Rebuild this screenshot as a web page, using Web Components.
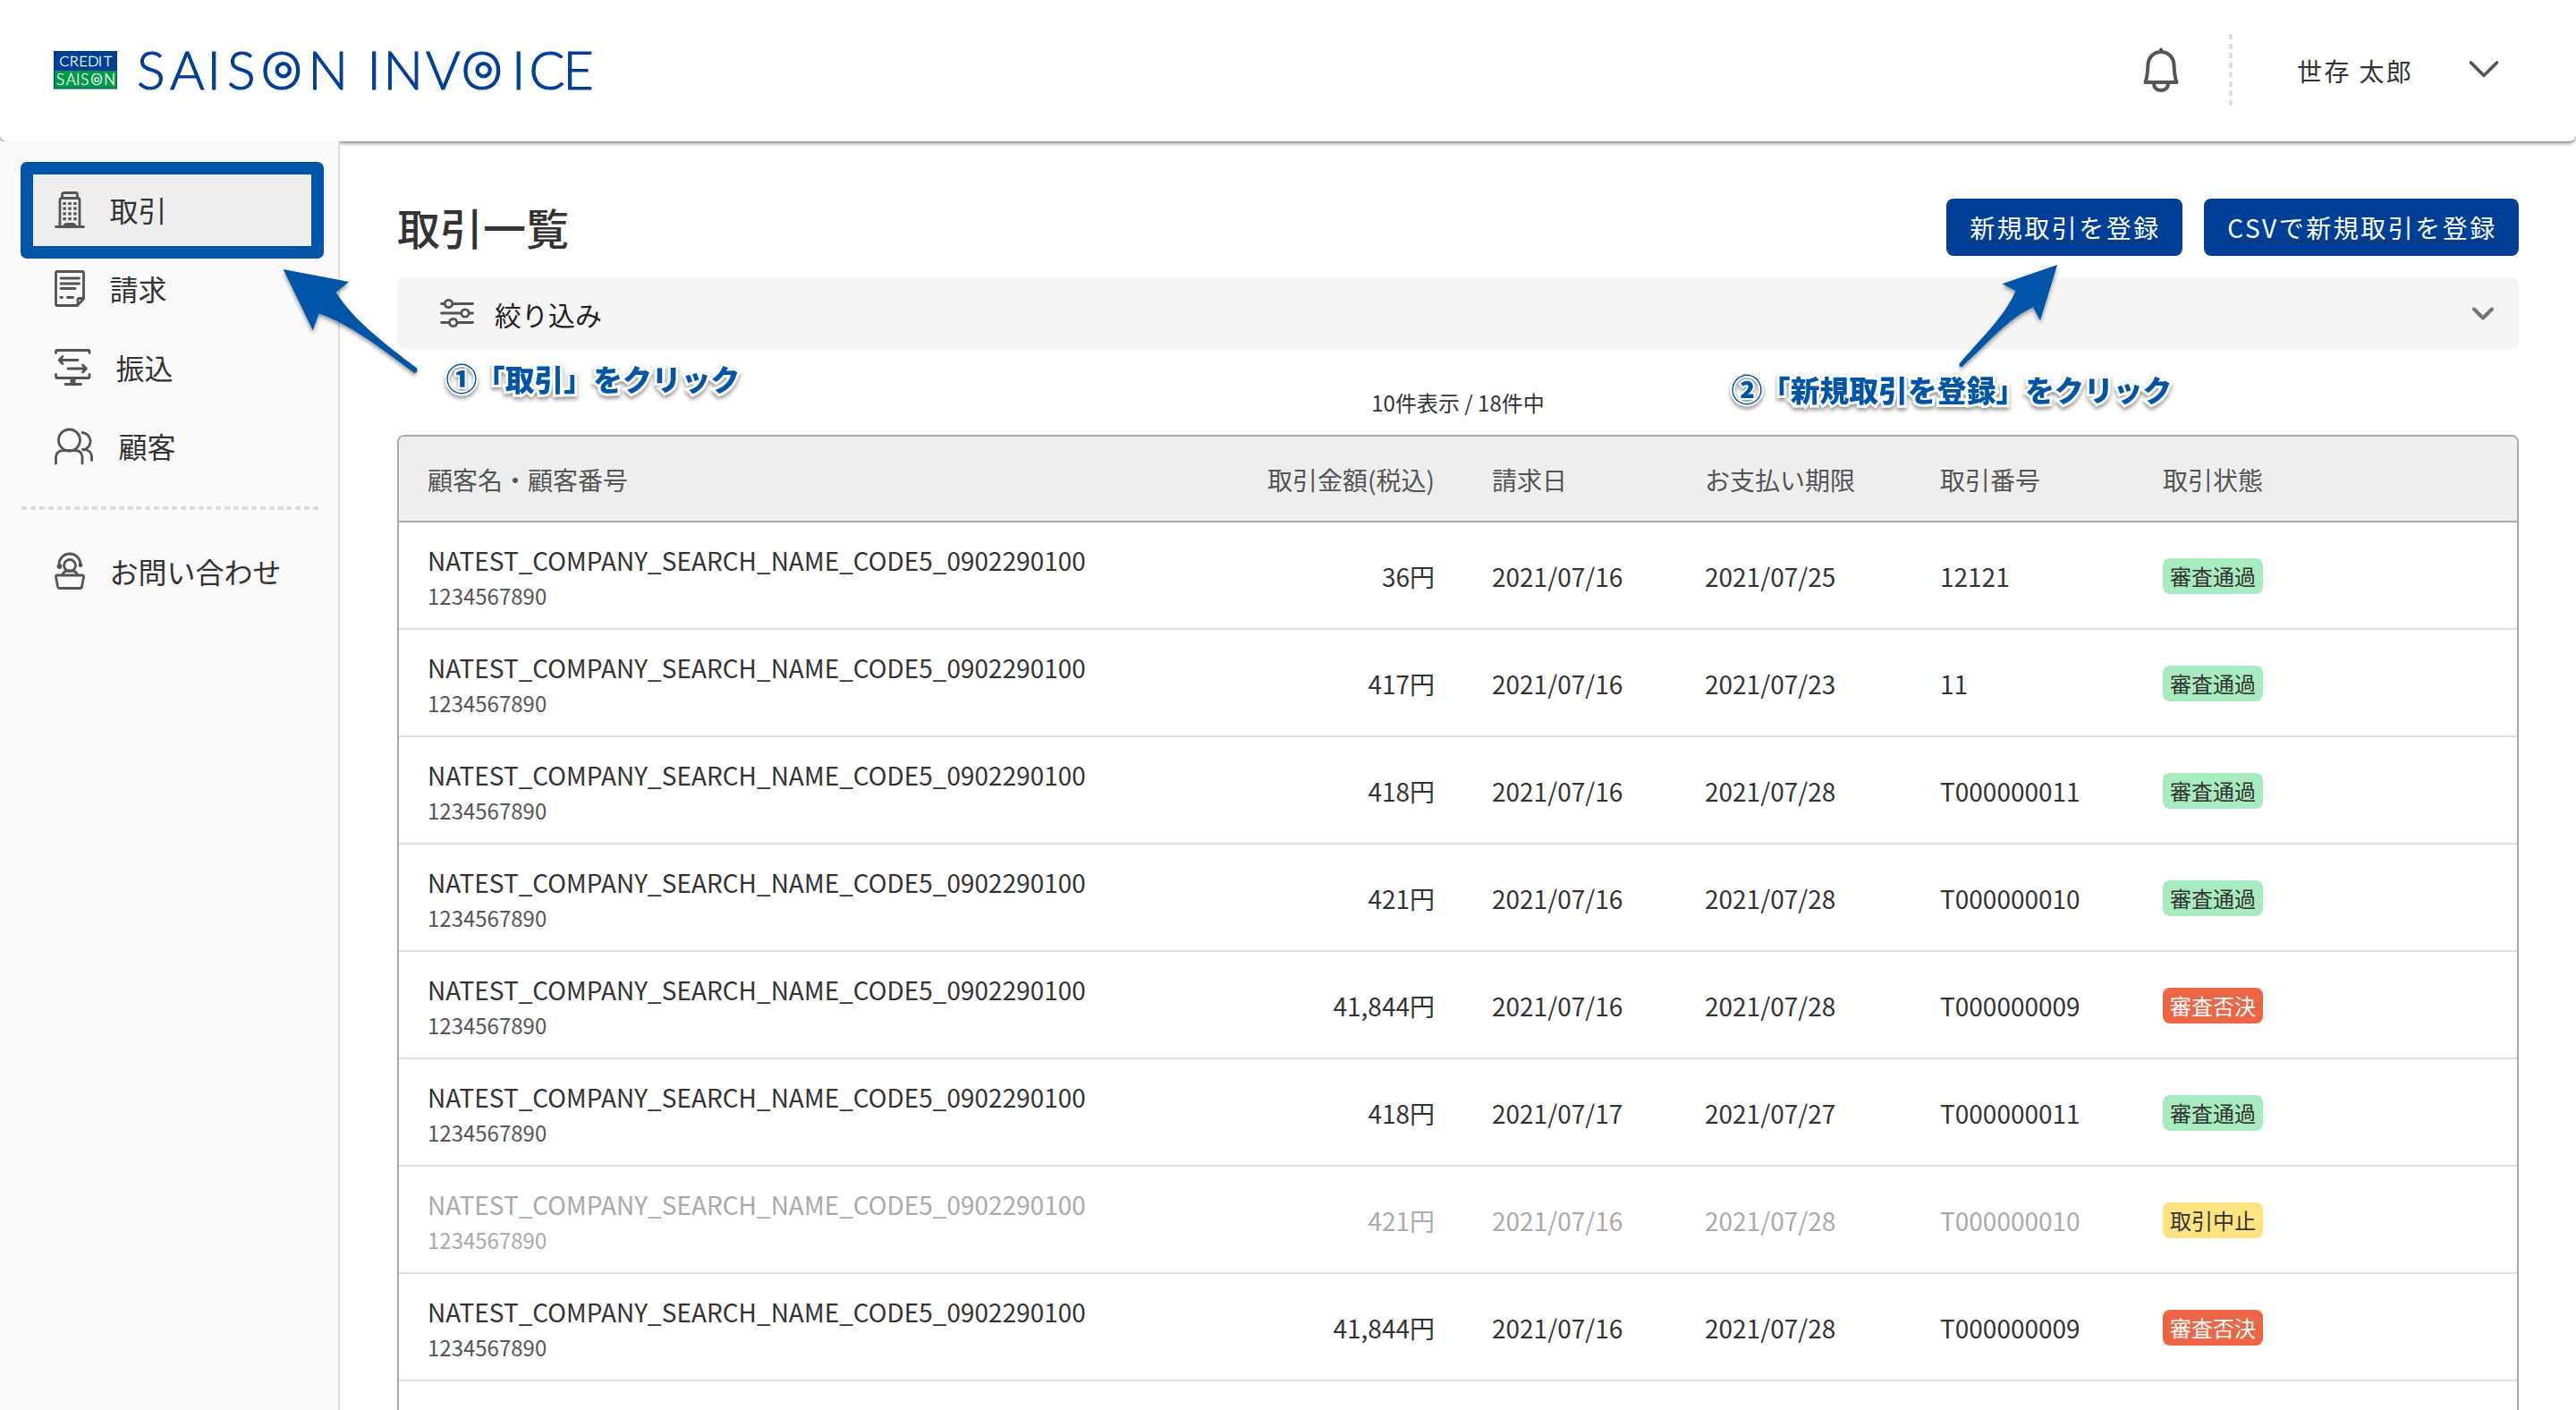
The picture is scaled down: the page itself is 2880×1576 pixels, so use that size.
<!DOCTYPE html>
<html lang="ja">
<head>
<meta charset="utf-8">
<title>SAISON INVOICE</title>
<style>
html,body{margin:0;padding:0}
body{width:2880px;height:1576px;overflow:hidden;background:#fff;color:#333;font-family:"Noto Sans CJK JP",sans-serif;font-size:28px}
</style>
</head>
<body>
<invoice-app></invoice-app>
<script>
const define=(name,html)=>customElements.define(name,class extends HTMLElement{
  connectedCallback(){
    if(this.shadowRoot)return;
    const t=document.createElement('template');
    t.innerHTML=typeof html==='function'?html(this):html;
    this.attachShadow({mode:'open'}).append(t.content.cloneNode(true));
  }
});

const ICONS={
  building:[34,41,`<path d="M1.5 39.5H32.5M6 39V9.5Q6 7.5 8 7.5H26Q28 7.5 28 9.5V39M8.5 7V3.5Q8.5 1.5 10.5 1.5H23.5Q25.5 1.5 25.5 3.5V7"/><path fill="currentColor" stroke="none" d="M9.500 40V38.500Q10 35 14 35H20Q24 35 24.500 38.500V40Z"/><path stroke-linecap="butt" stroke-width="3.200" stroke-dasharray="3.400 2.500" d="M9.400 13.500H24.700M9.400 19.200H24.700M9.400 24.900H24.700M9.400 30.600H24.700"/>`],
  bill:[34,41,`<path d="M3 1.500H31Q32.500 1.500 32.500 3V32L25.500 39.500H3Q1.500 39.500 1.500 38V3Q1.500 1.500 3 1.500ZM26 39V33Q26 31.500 27.500 31.500H32.500"/><path stroke-width="2.800" d="M7 9H27.500M7 15H27.500M7 20.500H23M7 30.500H8.500M14.500 30.500H20.500"/>`],
  transfer:[41,41,`<path d="M1.500 4.500V3Q1.500 1.500 3 1.500H37.500Q39 1.500 39 3V4.500M1.500 28.500V31Q1.500 32.500 3 32.500H37.500Q39 32.500 39 31V28.500M12 39.500H29.500M6 12.500H26M9 8.500L5 12.500L9 16.500M15 22H35M31.500 18L35.500 22L31.500 26"/><path stroke-width="6" stroke-linecap="butt" d="M20.500 33V39"/>`],
  people:[44,41,`<circle cx="16.500" cy="14" r="12"/><path d="M1.500 40V34Q1.500 25.500 10 25.500H23Q31 25.500 31 34V40M31 5.500A9.700 9.700 0 0 1 33 24.500M31.500 24.500H34Q41.500 26 41.500 33V36.500"/>`],
  support:[34,41,`<circle cx="17" cy="14" r="6.500"/><path d="M5 14.500V13A12 12 0 0 1 29 13V14.500M9 24Q11 20 14 20H20Q23.500 20 25.500 24M3 25H31Q32.800 25 32.500 27L30.500 38Q30.200 39.500 28.500 39.500H5.500Q4 39.500 3.600 38L1.500 27Q1.300 25 3 25Z"/><circle cx="5.500" cy="15" r="1.500"/><circle cx="29" cy="13.500" r="1"/>`],
  bell:[40,50,`<path stroke-width="4" d="M2.500 39H37.500Q35 32 34.500 19.500A14.500 14.500 0 0 0 5.500 19.500Q5 32 2.500 39ZM12 41A8 7 0 0 0 28 41M20 4V2.500"/>`],
  down:[34,22,`<path stroke-width="3.600" d="M2.500 3L17 17.500L31.500 3"/>`],
  downSmall:[26,17,`<path stroke="#757575" stroke-width="4" d="M3 3.500L13 13.500L23 3.500"/>`],
  tune:[38,32,`<path stroke-width="2.800" d="M1.500 5.500H5M14 5.500H36.500M1.500 16H23.500M32.500 16H36.500M1.500 26.500H10M19.500 26.500H36.500"/><circle cx="9.500" cy="5.500" r="4.200"/><circle cx="28" cy="16" r="4.200"/><circle cx="14.700" cy="26.500" r="4.200"/>`]
};
define('line-icon',el=>{const [w,h,d]=ICONS[el.getAttribute('name')];return `
<style>:host{display:block;flex:none;color:#555}svg{display:block;overflow:visible}</style>
<svg width="${w}" height="${h}" viewBox="0 0 ${w} ${h}" fill="none" stroke="currentColor" stroke-width="2.800" stroke-linecap="round" stroke-linejoin="round">${d}</svg>`});

define('brand-logo',`
<style>:host{display:block}svg{display:block;overflow:visible}text{font-family:Lato,sans-serif;font-weight:300}</style>
<svg width="640" height="100" viewBox="50 28 640 100">
  <rect x="60" y="57" width="71" height="42.500" fill="#003f98"/>
  <rect x="61" y="79" width="69.500" height="19.500" fill="#009a44"/>
  <g fill="#fff" stroke="#fff" stroke-width=".3"><text font-size="16.500" y="73.800" x="66.300 77.700 88.200 98 109.700 115.700">CREDIT</text>
  <text font-size="17" y="95.200" x="63 73.800 85 90.300 101.300 116.300">SAISON</text></g>
  <circle cx="108.200" cy="89.100" r="2.300" fill="none" stroke="#fff" stroke-width="1.300"/>
  <g fill="#003f98" stroke="#003f98" stroke-width="1.200"><text font-size="59" y="99.500" x="153 190 231.500 254 291.500 344.500 395 410.500 428.500 476 515.500 572 591.500 629.500">SAISON INVOICE</text></g>
  <g fill="none" stroke="#003f98" stroke-width="4.200"><circle cx="316.800" cy="78.300" r="7.100"/><circle cx="540.700" cy="78.300" r="7.100"/></g>
</svg>`);

define('app-header',`
<style>
:host{display:flex;align-items:center;height:158px;padding:0 86px 2px 50px;box-sizing:border-box;background:#fff;border-radius:0 0 8px 8px;box-shadow:0 2px 4px rgba(0,0,0,.5);position:relative}
brand-logo{margin-right:auto}
line-icon.bell{margin-right:56px}
.rule{width:4px;height:80px;background:repeating-linear-gradient(#dedede 0 6px,transparent 6px 10.570px)}
.user{margin-left:72px;width:192px;font-size:28px;letter-spacing:2.400px;line-height:40px;padding-top:2px}
</style>
<brand-logo></brand-logo><line-icon class="bell" name="bell"></line-icon><div class="rule"></div><div class="user">世存 太郎</div><line-icon class="down" name="down"></line-icon>`);

define('nav-item',el=>`
<style>
:host{display:flex;align-items:center;gap:28px;height:80px;margin:0 0 8px 37px;width:311px;padding-left:24px;box-sizing:border-box;font-size:32px;line-height:46px;position:relative}
:host([active]){background:#eee}
:host([active])::after{content:"";position:absolute;inset:-14px;border:14px solid #0055a9;border-radius:7px}
line-icon{margin-top:-1px;margin-left:-.5px}span{margin-top:-3px}
</style><line-icon name="${el.getAttribute('icon')}"></line-icon><span><slot></slot></span>`);

define('app-sidebar',`
<style>
:host{display:block;width:380px;box-sizing:border-box;border-right:2px solid #dcdcdc;background:#fafafa;padding-top:37px}
.rule{height:4px;width:332px;margin:27px 0 29px 24px;background:repeating-linear-gradient(90deg,#dedede 0 6px,transparent 6px 9.880px)}
</style>
<nav-item icon="building" active>取引</nav-item><nav-item icon="bill">請求</nav-item><nav-item icon="transfer">振込</nav-item><nav-item icon="people">顧客</nav-item>
<div class="rule"></div><nav-item icon="support">お問い合わせ</nav-item>`);

define('primary-button',`
<style>:host{display:flex;align-items:center;justify-content:center;height:64px;background:#003f98;border-radius:8px;color:#fff;font-size:28px;letter-spacing:2.500px;padding-left:2px;box-sizing:border-box}
span{text-decoration:underline;text-decoration-color:#183478;text-decoration-thickness:2px;text-underline-offset:3px;text-decoration-skip-ink:none;line-height:40px}</style>
<span><slot></slot></span>`);

define('filter-bar',`
<style>:host{display:flex;align-items:center;height:80px;background:#f5f5f5;border-radius:8px;padding:0 27px 0 48px;box-sizing:border-box;font-size:30px;color:#222}
span{margin:2px auto 0 23px;line-height:44px}</style>
<line-icon name="tune"></line-icon><span>絞り込み</span><line-icon name="downSmall"></line-icon>`);

define('status-badge',`
<style>:host{display:flex;align-items:center;justify-content:center;width:112px;height:40px;border-radius:8px;background:#a7ebbf;color:#333;font-size:24px;line-height:36px}
:host([kind=ng]){background:#ec6646;color:#fff}:host([kind=stop]){background:#ffe381}</style><slot></slot>`);

const COLS='display:grid;grid-template-columns:790px 400px 238px 263px 249px 1fr;box-sizing:border-box;padding-left:32px;align-items:center';
define('table-head',`
<style>:host{${COLS};height:96px;background:#eee;border-bottom:2px solid #a9a9a9;color:#555;font-size:28px;border-radius:6px 6px 0 0}
.amt{text-align:right;padding-right:64px}span{line-height:40px;margin-top:2px}</style>
<span>顧客名・顧客番号</span><span class="amt">取引金額(税込)</span><span>請求日</span><span>お支払い期限</span><span>取引番号</span><span>取引状態</span>`);

define('table-row',el=>{const a=n=>el.getAttribute(n);return `
<style>:host{${COLS};height:120px;border-bottom:2px solid #dedede;color:#333;font-size:28px}
:host([off]){color:#aaa}
.amt{text-align:right;padding-right:64px}span{line-height:40px;margin-top:2px}
.name{line-height:40px}.code{font-size:24px;line-height:36px;margin-top:2px;color:#555}:host([off]) .code{color:#aaa}
.who{white-space:nowrap;margin-top:4px}status-badge{margin-top:2px}</style>
<div class="who"><div class="name">NATEST_COMPANY_SEARCH_NAME_CODE5_0902290100</div><div class="code">1234567890</div></div>
<span class="amt">${a('amount')}円</span><span>${a('date')}</span><span>${a('due')}</span><span>${a('no')}</span>
<status-badge kind="${a('kind')}">${{ok:'審査通過',ng:'審査否決',stop:'取引中止'}[a('kind')]}</status-badge>`});

const ROWS=[
['36','2021/07/16','2021/07/25','12121','ok'],
['417','2021/07/16','2021/07/23','11','ok'],
['418','2021/07/16','2021/07/28','T000000011','ok'],
['421','2021/07/16','2021/07/28','T000000010','ok'],
['41,844','2021/07/16','2021/07/28','T000000009','ng'],
['418','2021/07/17','2021/07/27','T000000011','ok'],
['421','2021/07/16','2021/07/28','T000000010','stop'],
['41,844','2021/07/16','2021/07/28','T000000009','ng']];
define('deal-table',()=>`
<style>:host{display:block;height:1200px;border:2px solid #a9a9a9;border-radius:8px;box-sizing:border-box}</style>
<table-head></table-head>`+ROWS.map(([m,d,u,n,k])=>`<table-row amount="${m}" date="${d}" due="${u}" no="${n}" kind="${k}"${k==='stop'?' off':''}></table-row>`).join(''));

define('deal-page',`
<style>:host{display:block;padding:64px 64px 0;box-sizing:border-box}
.top{display:flex;align-items:center;gap:24px;height:64px;margin-bottom:24px}
h1{margin:-3px auto 0 0;font-size:48px;font-weight:500;line-height:70px}
.count{height:96px;display:flex;align-items:center;justify-content:center;font-size:24px;line-height:36px;box-sizing:border-box;padding-top:23px}
.b1{width:264px}.b2{width:352px}</style>
<div class="top"><h1>取引一覧</h1><primary-button class="b1">新規取引を登録</primary-button><primary-button class="b2">CSVで新規取引を登録</primary-button></div>
<filter-bar></filter-bar><div class="count">10件表示 / 18件中</div><deal-table></deal-table>`);

define('guide-note',`
<style>:host{position:absolute;white-space:nowrap;font-size:32.850px;line-height:48px;font-weight:900;color:#0055a9;filter:drop-shadow(0 3px 2px rgba(0,0,0,.4))}
span{-webkit-text-stroke:6px #fff;paint-order:stroke fill}
.num{display:inline-block;font-size:35px;width:32.850px;text-indent:-.5px;-webkit-text-stroke-width:4px}</style><span class="num"><slot name="num"></slot></span><span><slot></slot></span>`);

define('guide-arrows',`
<style>:host{position:absolute;left:0;top:0;pointer-events:none}svg{display:block;filter:drop-shadow(0 3px 2px rgba(0,0,0,.4))}</style>
<svg width="2880" height="500" fill="#0055a9">
<path d="M316.700 301L390.300 315L375.700 326.500C394 357 430 384 466 411.500Q467.500 416 463.500 417C424 388 391 362 356.600 350.500L349.700 369.300Z"/>
<path d="M2300 296L2238.500 317.300L2253.500 325C2242 353 2214 379 2190.600 406.500Q2190 411 2193.500 410C2222 384 2246 355 2273 343.300L2281 358.300Z"/>
</svg>`);

define('invoice-app',`
<style>:host{display:block;position:relative;width:2880px;height:1576px;overflow:hidden;background:#fff}
.body{display:flex;height:1418px}app-sidebar{flex:none;position:relative;z-index:1}deal-page{flex:1}
.n1{left:499px;top:398px}.n2{left:1936px;top:410px}
guide-note,guide-arrows{z-index:3}</style>
<app-header></app-header>
<div class="body"><app-sidebar></app-sidebar><deal-page></deal-page></div>
<guide-arrows></guide-arrows>
<guide-note class="n1"><b slot="num">①</b>「取引」をクリック</guide-note>
<guide-note class="n2"><b slot="num">②</b>「新規取引を登録」をクリック</guide-note>`);
</script>
</body>
</html>
